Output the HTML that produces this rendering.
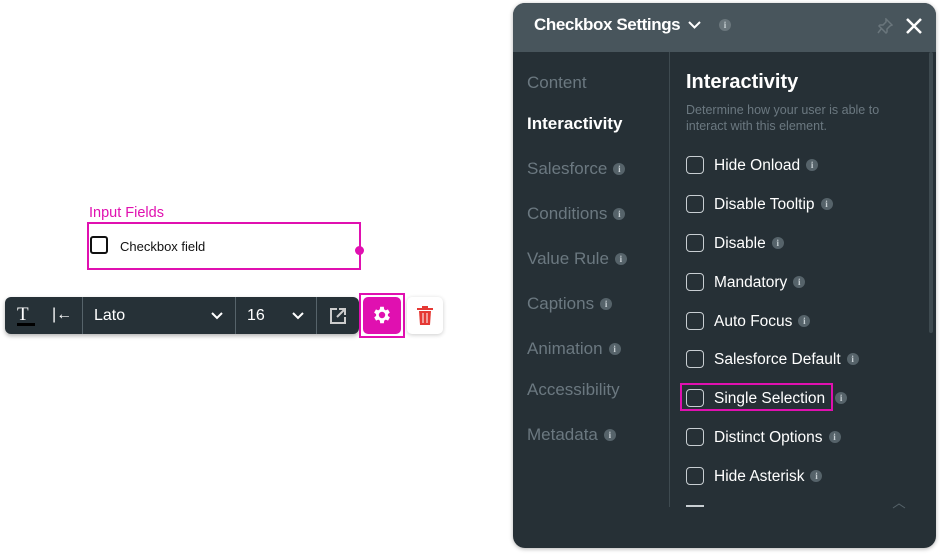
<!DOCTYPE html>
<html><head><meta charset="utf-8"><style>
*{box-sizing:border-box;margin:0;padding:0}
body{width:940px;height:554px;background:#fff;position:relative;overflow:hidden;font-family:"Liberation Sans",sans-serif}
.abs{position:absolute}
.nav{position:absolute;left:527px;color:#6b7880;font-size:17px}
.info{display:inline-block;width:12px;height:12px;border-radius:50%;background:#56636a;color:#c8d0d4;font-size:9px;line-height:12px;text-align:center;font-family:"Liberation Serif",serif;font-weight:bold;vertical-align:2px;margin-left:6px}
.opt{position:absolute;left:686px;color:#fff;font-size:15.5px;height:20px;line-height:18px}
.cb{display:inline-block;width:18px;height:18px;border:1.5px solid #c8ced2;border-radius:4px;vertical-align:-4px;margin-right:10px}
</style></head><body>

<div class="abs" style="left:89px;top:205px;color:#e010b0;font-size:14.5px">Input Fields</div>
<div class="abs" style="left:87px;top:222px;width:274px;height:48px;border:2px solid #e010b0"></div>
<div class="abs" style="left:355px;top:246px;width:9px;height:9px;border-radius:50%;background:#e010b0"></div>
<div class="abs" style="left:90px;top:236px;width:18px;height:18px;border:2px solid #111;border-radius:3px"></div>
<div class="abs" style="left:120px;top:239px;font-size:13px;color:#111">Checkbox field</div>

<div class="abs" style="left:5px;top:297px;width:354px;height:37px;background:#263137;border-radius:6px;box-shadow:0 2px 4px rgba(0,0,0,.3)"></div>
<div class="abs" style="left:17px;top:304px;color:#fff;font-size:19px;font-family:'Liberation Serif',serif">T</div>
<div class="abs" style="left:17px;top:323px;width:18px;height:3px;background:#000"></div>
<div class="abs" style="left:52px;top:306px;color:#fff;font-size:16px">|←</div>
<div class="abs" style="left:82px;top:297px;width:1px;height:37px;background:#56636a"></div>
<div class="abs" style="left:94px;top:307px;color:#fff;font-size:16px">Lato</div>
<svg class="abs" style="left:210px;top:311px" width="14" height="9"><path d="M2 2l5 5 5-5" stroke="#fff" stroke-width="2" fill="none"/></svg>
<div class="abs" style="left:235px;top:297px;width:1px;height:37px;background:#56636a"></div>
<div class="abs" style="left:247px;top:307px;color:#fff;font-size:16px">16</div>
<svg class="abs" style="left:291px;top:311px" width="14" height="9"><path d="M2 2l5 5 5-5" stroke="#fff" stroke-width="2" fill="none"/></svg>
<div class="abs" style="left:316px;top:297px;width:1px;height:37px;background:#56636a"></div>
<svg class="abs" style="left:329px;top:307px" width="18" height="18"><path d="M8 2H2v14h14v-6M10 2h6v6M16 2l-8 8" stroke="#ccc" stroke-width="2" fill="none"/></svg>

<div class="abs" style="left:359px;top:293px;width:46px;height:45px;border:2px solid #e010b0;background:#fff"></div>
<div class="abs" style="left:363px;top:297px;width:38px;height:37px;background:#e010b0;border-radius:5px"></div>
<svg class="abs" style="left:371px;top:304px" width="22" height="22" viewBox="0 0 24 24"><path fill="#fff" d="M19.4 13a7.5 7.5 0 000-2l2.1-1.6-2-3.5-2.5 1a7 7 0 00-1.7-1L15 3h-4l-.4 2.9a7 7 0 00-1.7 1l-2.5-1-2 3.5L6.6 11a7.5 7.5 0 000 2l-2.1 1.6 2 3.5 2.5-1a7 7 0 001.7 1L11 21h4l.4-2.9a7 7 0 001.7-1l2.5 1 2-3.5zM13 15.5a3.5 3.5 0 110-7 3.5 3.5 0 010 7z" transform="translate(-1 0)"/></svg>
<div class="abs" style="left:407px;top:297px;width:36px;height:37px;background:#fff;border-radius:5px;box-shadow:0 1px 4px rgba(0,0,0,.2)"></div>
<svg class="abs" style="left:417px;top:306px" width="16" height="19"><rect x="0" y="2" width="16" height="2" fill="#e53935"/><rect x="5" y="0" width="6" height="3" fill="#e53935"/><path d="M2 5h12l-1 14H3z" fill="#e53935"/><path d="M6 7v10M10 7v10" stroke="#fff" stroke-width="1"/></svg>

<div class="abs" style="left:513px;top:3px;width:423px;height:545px;background:#263036;border-radius:12px;box-shadow:0 1px 4px rgba(0,0,0,.3);overflow:hidden">
 <div style="height:49px;background:#48555c"></div>
</div>
<div class="abs" style="left:534px;top:15px;color:#fff;font-size:17px;font-weight:bold;letter-spacing:-0.4px">Checkbox Settings</div>
<svg class="abs" style="left:688px;top:21px" width="13" height="9"><path d="M1 1l5.5 5.5L12 1" stroke="#fff" stroke-width="2" fill="none"/></svg>
<span class="info abs" style="left:713px;top:19px;background:#6a767c">i</span>
<svg class="abs" style="left:877px;top:18px" width="16" height="16"><path d="M9 1l6 6-2 1-3 3 0 3-1 1-7-7 1-1h3l3-3z M4 11l-3 4" stroke="#6a767c" stroke-width="1.5" fill="none"/></svg>
<svg class="abs" style="left:905px;top:17px" width="18" height="18"><path d="M2 2l14 14M16 2L2 16" stroke="#fff" stroke-width="2.5"/></svg>

<div class="abs" style="left:669px;top:52px;width:1px;height:455px;background:#3e4a50"></div>
<div class="abs" style="left:929px;top:52px;width:4px;height:281px;background:#3e4a50;border-radius:2px"></div>

<div class="nav" style="top:73px">Content</div>
<div class="nav" style="top:114px;color:#fff;font-weight:bold">Interactivity</div>
<div class="nav" style="top:159px">Salesforce<span class="info">i</span></div>
<div class="nav" style="top:204px">Conditions<span class="info">i</span></div>
<div class="nav" style="top:249px">Value Rule<span class="info">i</span></div>
<div class="nav" style="top:294px">Captions<span class="info">i</span></div>
<div class="nav" style="top:339px">Animation<span class="info">i</span></div>
<div class="nav" style="top:380px">Accessibility</div>
<div class="nav" style="top:425px">Metadata<span class="info">i</span></div>

<div class="abs" style="left:686px;top:71px;color:#fff;font-size:20px;font-weight:bold">Interactivity</div>
<div class="abs" style="left:686px;top:102px;color:#6b7880;font-size:12.5px;line-height:16px">Determine how your user is able to<br>interact with this element.</div>

<div class="opt" style="top:156px"><span class="cb"></span>Hide Onload<span class="info">i</span></div>
<div class="opt" style="top:195px"><span class="cb"></span>Disable Tooltip<span class="info">i</span></div>
<div class="opt" style="top:234px"><span class="cb"></span>Disable<span class="info">i</span></div>
<div class="opt" style="top:273px"><span class="cb"></span>Mandatory<span class="info">i</span></div>
<div class="opt" style="top:312px"><span class="cb"></span>Auto Focus<span class="info">i</span></div>
<div class="opt" style="top:350px"><span class="cb"></span>Salesforce Default<span class="info">i</span></div>
<div class="abs" style="left:680px;top:383px;width:153px;height:28px;border:2px solid #e010b0"></div>
<div class="opt" style="top:389px"><span class="cb"></span>Single Selection<span class="info" style="margin-left:10px">i</span></div>
<div class="opt" style="top:428px"><span class="cb"></span>Distinct Options<span class="info">i</span></div>
<div class="opt" style="top:467px"><span class="cb"></span>Hide Asterisk<span class="info">i</span></div>
<div class="abs" style="left:686px;top:505px;width:18px;height:2px;background:#c8ced2"></div>
<svg class="abs" style="left:892px;top:503px" width="14" height="6"><path d="M1 5l6-4 6 4" stroke="#56636a" fill="none"/></svg>
</body></html>
